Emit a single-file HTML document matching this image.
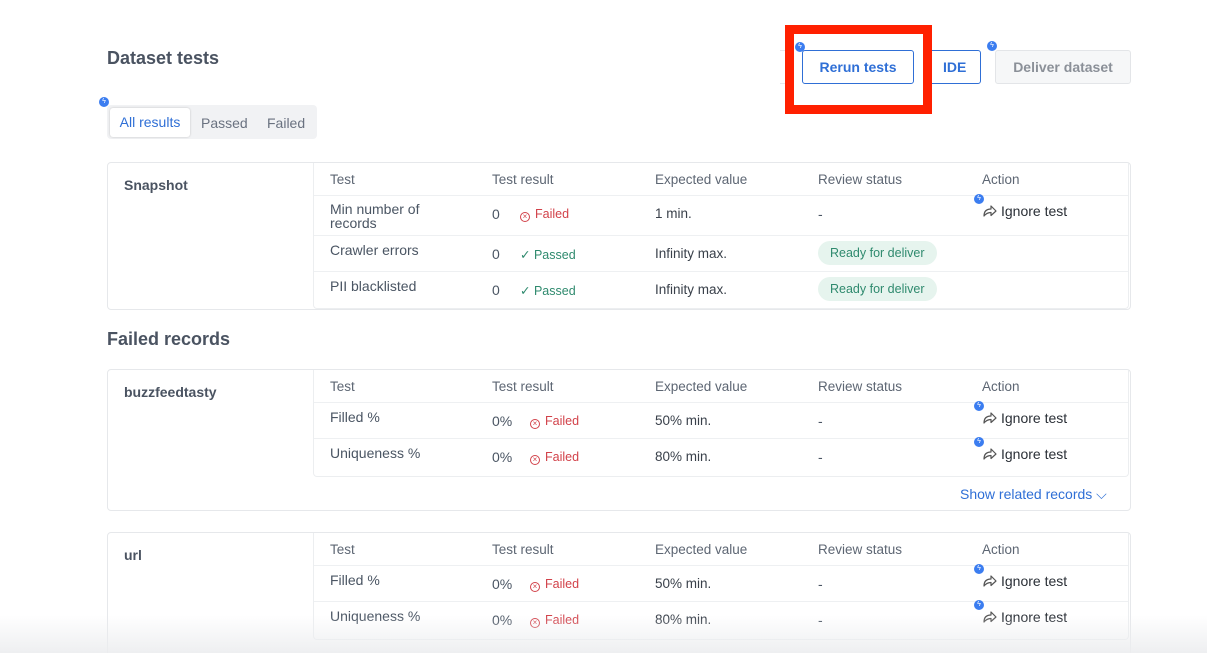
<!DOCTYPE html>
<html><head><meta charset="utf-8"><style>
*{box-sizing:border-box;margin:0;padding:0}
html,body{width:1207px;height:653px;overflow:hidden}
body{background:#fff;font-family:"Liberation Sans",sans-serif;color:#4a5563;position:relative;font-size:14px}
.a{position:absolute;white-space:nowrap}
h2{position:absolute;font-size:18px;font-weight:bold;color:#4a5361}
.card{position:absolute;left:107px;width:1024px;border:1px solid #e6e8eb;border-radius:4px;background:#fff}
.inner{position:absolute;left:205px;right:1px;top:0;border-left:1px solid #eceef0;border-right:1px solid #eceef0;border-bottom:1px solid #eceef0;border-radius:0 0 4px 4px}
.hline{position:absolute;left:206px;right:2px;height:1px;background:#eef0f2}
.th{color:#5d6673;font-size:13.5px}
.fail{color:#d2424a;font-size:12.5px}
.pass{color:#2f8a6e;font-size:12.5px}
.exp{color:#39404a;font-size:13.5px}
.pill{background:#e6f4ee;color:#2f8a6e;font-size:12.5px;padding:5px 12px;border-radius:12px}
.dot{position:absolute;width:10px;height:10px;border-radius:50%;background:#3b7df0;color:#fff;font-size:7px;line-height:10px;text-align:center}
.ig{color:#2a2f36;font-size:14px}
.ig svg{vertical-align:-2px;margin-right:4px}
.x{display:inline-block;width:10px;height:10px;border:1px solid #d2424a;border-radius:50%;font-size:8px;line-height:8px;text-align:center;margin-right:5px;vertical-align:-1px}
</style></head><body>
<h2 style="left:107px;top:48px">Dataset tests</h2>
<div class="a" style="left:780px;top:50px;width:30px;height:34px;border-top:1px solid #e6e8eb;border-bottom:1px solid #e6e8eb"></div>
<div class="a" style="left:910px;top:50px;width:71px;height:34px;border:1px solid #2f6fd6;border-radius:3px;color:#2f6fd6;font-weight:bold;font-size:14px;line-height:32px;padding-left:32px">IDE</div>
<div class="a" style="left:785px;top:25px;width:147px;height:89px;border:9px solid #ff2000;background:#fff"></div>
<div class="a" style="left:802px;top:50px;width:112px;height:34px;border:1px solid #2f6fd6;border-radius:3px;color:#2f6fd6;font-weight:bold;font-size:14px;text-align:center;line-height:32px">Rerun tests</div>
<div class="dot" style="left:795px;top:42px">ϟ</div>
<div class="a" style="left:995px;top:50px;width:136px;height:34px;border:1px solid #e3e5e8;border-radius:3px;background:#f6f7f8;color:#8b9098;font-weight:bold;font-size:14px;text-align:center;line-height:32px">Deliver dataset</div>
<div class="dot" style="left:987px;top:41px">ϟ</div>

<div class="a" style="left:107px;top:105px;width:210px;height:34px;background:#f1f2f4;border-radius:4px"></div>
<div class="a" style="left:110px;top:108px;width:80px;height:29px;background:#fff;border-radius:3px;box-shadow:0 0 2px rgba(0,0,0,.2);color:#2f6fd6;font-size:14px;line-height:29px;text-align:center">All results</div>
<div class="a" style="left:201px;top:115px;color:#6a7280">Passed</div>
<div class="a" style="left:267px;top:115px;color:#6a7280">Failed</div>
<div class="dot" style="left:99px;top:97px">ϟ</div>

<!-- card 1 -->
<div class="card" style="top:162px;height:148px">
<div class="inner" style="height:146px"></div>
<div class="hline" style="top:32px"></div><div class="hline" style="top:72px"></div><div class="hline" style="top:108px"></div>
</div>
<div class="a" style="left:124px;top:177px;font-weight:bold;color:#4a5361;font-size:14px">Snapshot</div>
<div class="a th" style="left:330px;top:172px">Test</div><div class="a th" style="left:492px;top:172px">Test result</div><div class="a th" style="left:655px;top:172px">Expected value</div><div class="a th" style="left:818px;top:172px">Review status</div><div class="a th" style="left:982px;top:172px">Action</div>
<div class="a" style="left:330px;top:202px;line-height:14px">Min number of<br>records</div>
<div class="a" style="left:492px;top:206px">0</div><div class="a fail" style="left:520px;top:207px"><span class="x">×</span>Failed</div><div class="a exp" style="left:655px;top:206px">1 min.</div><div class="a" style="left:818px;top:206px">-</div>
<div class="dot" style="left:974px;top:194px">ϟ</div><div class="a ig" style="left:982px;top:203px"><svg width="15" height="14" viewBox="0 0 15 14"><path d="M2 12 C2 7 5 5 9 5 V2 L14 7 L9 11.5 V8.5 C6 8.5 4 9.5 2 12Z" fill="none" stroke="#555" stroke-width="1.2" stroke-linejoin="round"/></svg>Ignore test</div>
<div class="a" style="left:330px;top:242px">Crawler errors</div><div class="a" style="left:492px;top:246px">0</div><div class="a pass" style="left:520px;top:247px">✓ Passed</div><div class="a exp" style="left:655px;top:246px">Infinity max.</div><div class="a pill" style="left:818px;top:241px">Ready for deliver</div>
<div class="a" style="left:330px;top:278px">PII blacklisted</div><div class="a" style="left:492px;top:282px">0</div><div class="a pass" style="left:520px;top:283px">✓ Passed</div><div class="a exp" style="left:655px;top:282px">Infinity max.</div><div class="a pill" style="left:818px;top:277px">Ready for deliver</div>

<h2 style="left:107px;top:329px">Failed records</h2>
<!-- card 2 -->
<div class="card" style="top:369px;height:142px">
<div class="inner" style="height:107px"></div>
<div class="hline" style="top:32px"></div><div class="hline" style="top:68px"></div>
</div>
<div class="a" style="left:124px;top:384px;font-weight:bold;color:#4a5361">buzzfeedtasty</div>
<div class="a th" style="left:330px;top:379px">Test</div><div class="a th" style="left:492px;top:379px">Test result</div><div class="a th" style="left:655px;top:379px">Expected value</div><div class="a th" style="left:818px;top:379px">Review status</div><div class="a th" style="left:982px;top:379px">Action</div>
<div class="a" style="left:330px;top:409px">Filled %</div><div class="a" style="left:492px;top:413px">0%</div><div class="a fail" style="left:530px;top:414px"><span class="x">×</span>Failed</div><div class="a exp" style="left:655px;top:413px">50% min.</div><div class="a" style="left:818px;top:413px">-</div><div class="dot" style="left:974px;top:401px">ϟ</div><div class="a ig" style="left:982px;top:410px"><svg width="15" height="14" viewBox="0 0 15 14"><path d="M2 12 C2 7 5 5 9 5 V2 L14 7 L9 11.5 V8.5 C6 8.5 4 9.5 2 12Z" fill="none" stroke="#555" stroke-width="1.2" stroke-linejoin="round"/></svg>Ignore test</div>
<div class="a" style="left:330px;top:445px">Uniqueness %</div><div class="a" style="left:492px;top:449px">0%</div><div class="a fail" style="left:530px;top:450px"><span class="x">×</span>Failed</div><div class="a exp" style="left:655px;top:449px">80% min.</div><div class="a" style="left:818px;top:449px">-</div><div class="dot" style="left:974px;top:437px">ϟ</div><div class="a ig" style="left:982px;top:446px"><svg width="15" height="14" viewBox="0 0 15 14"><path d="M2 12 C2 7 5 5 9 5 V2 L14 7 L9 11.5 V8.5 C6 8.5 4 9.5 2 12Z" fill="none" stroke="#555" stroke-width="1.2" stroke-linejoin="round"/></svg>Ignore test</div>
<div class="a" style="left:960px;top:486px;color:#2f6fd6">Show related records ⌵</div>

<!-- card 3 -->
<div class="card" style="top:532px;height:140px">
<div class="inner" style="height:107px"></div>
<div class="hline" style="top:32px"></div><div class="hline" style="top:68px"></div>
</div>
<div class="a" style="left:124px;top:547px;font-weight:bold;color:#4a5361">url</div>
<div class="a th" style="left:330px;top:542px">Test</div><div class="a th" style="left:492px;top:542px">Test result</div><div class="a th" style="left:655px;top:542px">Expected value</div><div class="a th" style="left:818px;top:542px">Review status</div><div class="a th" style="left:982px;top:542px">Action</div>
<div class="a" style="left:330px;top:572px">Filled %</div><div class="a" style="left:492px;top:576px">0%</div><div class="a fail" style="left:530px;top:577px"><span class="x">×</span>Failed</div><div class="a exp" style="left:655px;top:576px">50% min.</div><div class="a" style="left:818px;top:576px">-</div><div class="dot" style="left:974px;top:564px">ϟ</div><div class="a ig" style="left:982px;top:573px"><svg width="15" height="14" viewBox="0 0 15 14"><path d="M2 12 C2 7 5 5 9 5 V2 L14 7 L9 11.5 V8.5 C6 8.5 4 9.5 2 12Z" fill="none" stroke="#555" stroke-width="1.2" stroke-linejoin="round"/></svg>Ignore test</div>
<div class="a" style="left:330px;top:608px">Uniqueness %</div><div class="a" style="left:492px;top:612px">0%</div><div class="a fail" style="left:530px;top:613px"><span class="x">×</span>Failed</div><div class="a exp" style="left:655px;top:612px">80% min.</div><div class="a" style="left:818px;top:612px">-</div><div class="dot" style="left:974px;top:600px">ϟ</div><div class="a ig" style="left:982px;top:609px"><svg width="15" height="14" viewBox="0 0 15 14"><path d="M2 12 C2 7 5 5 9 5 V2 L14 7 L9 11.5 V8.5 C6 8.5 4 9.5 2 12Z" fill="none" stroke="#555" stroke-width="1.2" stroke-linejoin="round"/></svg>Ignore test</div>
<div class="a" style="left:0;top:615px;width:1207px;height:38px;background:linear-gradient(rgba(240,241,243,0),rgba(236,237,239,.9))"></div>
</body></html>
